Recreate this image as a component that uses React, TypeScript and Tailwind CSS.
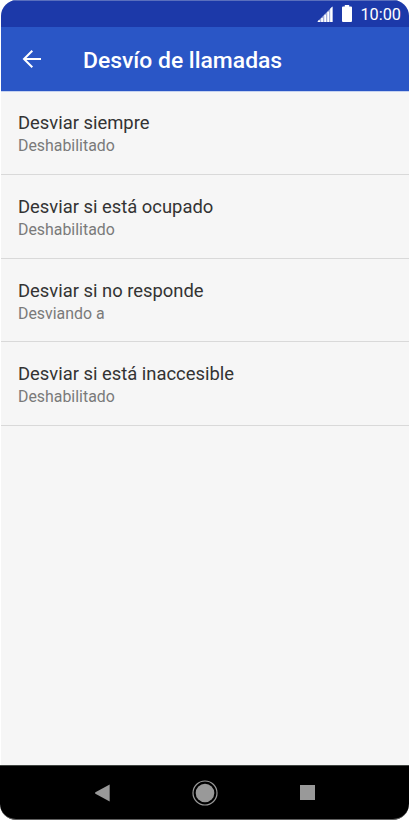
const options = [
  { title: "Desviar siempre", status: "Deshabilitado", box: "h-[83px] pt-[19px]" },
  { title: "Desviar si está ocupado", status: "Deshabilitado", box: "h-[84px] pt-[20px]" },
  { title: "Desviar si no responde", status: "Desviando a", box: "h-[83px] pt-[20px]" },
  { title: "Desviar si está inaccesible", status: "Deshabilitado", box: "h-[84px] pt-[20px]" },
];

function StatusBar() {
  return (
    <div className="flex h-[27px] items-start justify-end border-t border-[#5a6fbd] bg-[#1c39a9] pr-[8px] text-white">
      <svg width="16" height="16" viewBox="0 0 16 16" className="mt-[5px]">
        <path d="M0 16L15.500 .5V16Z" fill="#a4b0dc" />
        <path
          d="M1 16v-1.500h2V16zM4.200 16v-4h1.700v4zM7.300 16V8.800H9V16zM10.300 16V5.700h1.700V16zM13.200 16V2.800L15.500.5V16z"
          fill="#fff"
        />
      </svg>
      <svg width="10" height="17" viewBox="0 0 10 17" className="ml-[9px] mt-[4px]">
        <path d="M2.800 0h4.400v1.500H9q1 0 1 1V16q0 1-1 1H1q-1 0-1-1V2.500q0-1 1-1h1.800z" fill="#fff" />
      </svg>
      <span className="ml-[8px] mt-[4px] text-[16.3px] leading-[20px]">10:00</span>
    </div>
  );
}

function Header() {
  return (
    <header className="flex h-[64px] items-center bg-[#2a56c6] pl-[21px] text-white">
      <svg width="20" height="20" viewBox="0 0 20 20" fill="none" stroke="#fff" strokeWidth="2">
        <path d="M19 10H2M10.300 1.700L2 10l8.300 8.300" />
      </svg>
      <h1 className="ml-[41px] mt-[4px] text-[22.9px] leading-[28px] font-medium">
        Desvío de llamadas
      </h1>
    </header>
  );
}

function NavBar() {
  return (
    <nav className="flex h-[55px] items-center rounded-b-[16px] border-y border-t-[#404541] border-b-[#606060] bg-black pl-[94px]">
      <svg width="16" height="18" viewBox="0 0 16 18">
        <path d="M15.700 .5v17L1.400 9.700q-.8-.7 0-1.400z" fill="#999" />
      </svg>
      <svg width="26" height="26" viewBox="0 0 26 26" className="ml-[82px]">
        <circle cx="13" cy="13" r="12" fill="none" stroke="#999" strokeWidth="1.200" />
        <circle cx="13" cy="13" r="9.300" fill="#999" />
      </svg>
      <div className="ml-[82px] size-[14.5px] bg-[#999]" />
    </nav>
  );
}

export default function App() {
  return (
    <div className="h-[820px] w-[410px] bg-white font-['Roboto',sans-serif]">
      <div className="flex h-[820px] w-[409px] flex-col">
        <div className="ml-px flex flex-1 flex-col overflow-hidden rounded-t-[16px] bg-[#f6f6f6]">
          <StatusBar />
          <Header />
          <main className="flex-1 border-t border-[#c5d2f0]">
            {options.map((option) => (
              <div
                key={option.title}
                className={`border-b border-[#d9d9d9] pl-[17px] ${option.box}`}
              >
                <p className="text-[18.4px] leading-[24px] text-[#333]">{option.title}</p>
                <p className="text-[15.9px] leading-[22px] text-[#7a7a7a]">{option.status}</p>
              </div>
            ))}
          </main>
        </div>
        <NavBar />
      </div>
    </div>
  );
}
